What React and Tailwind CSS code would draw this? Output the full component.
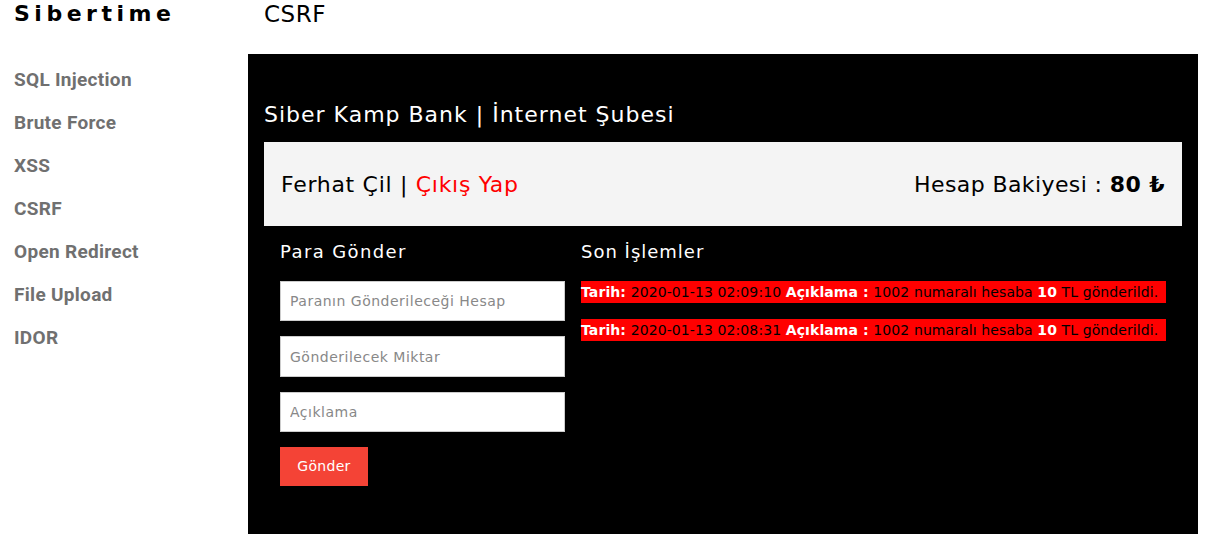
import React from 'react';

const menu = ['SQL Injection', 'Brute Force', 'XSS', 'CSRF', 'Open Redirect', 'File Upload', 'IDOR'];

const transactions = [
    { date: '2020-01-13 02:09:10' },
    { date: '2020-01-13 02:08:31' },
];

const App = () => {
    return (
        <div className="flex min-h-[556px] bg-white font-['DejaVu_Sans',sans-serif]">
            {/* sidebar */}
            <aside className="w-[248px] shrink-0 pl-[14px]">
                <div className="pt-[1px] text-[22px] font-bold leading-[26px] tracking-[4.5px] text-black">Sibertime</div>
                <nav className="mt-[41px] flex flex-col gap-[20px] font-['Roboto',sans-serif] text-[19px] font-bold tracking-[0.3px] text-[#707070]">
                    {menu.map((item) => (
                        <a key={item} href="#" className="leading-[23px]">{item}</a>
                    ))}
                </nav>
            </aside>

            {/* main */}
            <main className="flex-1 pr-[23px]">
                <h1 className="pl-[16px] pt-[1px] text-[23px] leading-[26px] tracking-[0.5px] text-black">CSRF</h1>
                <div className="mt-[27px] bg-black px-[16px] pb-[48px] pt-[45px]">
                    <h2 className="text-[22px] leading-[32px] tracking-[1px] text-white">Siber Kamp Bank | İnternet Şubesi</h2>
                    <div className="mt-[11px] flex h-[84px] items-center justify-between bg-[#f4f4f4] px-[17px] text-[22px] text-black">
                        <div className="tracking-[0.7px]">
                            Ferhat Çil | <a href="#" className="text-[#ff0000]">Çıkış Yap</a>
                        </div>
                        <div className="tracking-[0.4px]">
                            Hesap Bakiyesi : <span className="font-bold">80 ₺</span>
                        </div>
                    </div>

                    <div className="flex">
                        <section className="w-[301px] pl-[16px] pt-[13px]">
                            <h3 className="text-[18px] leading-[26px] tracking-[1.4px] text-white">Para Gönder</h3>
                            <form className="mt-[16px] flex flex-col gap-[15px]">
                                <input className="h-[40px] w-full border border-[#ccc] bg-white px-[9px] text-[14px] tracking-[0.5px] text-black outline-none placeholder:text-[#888]" placeholder="Paranın Gönderileceği Hesap" />
                                <input className="h-[41px] w-full border border-[#ccc] bg-white px-[9px] text-[14px] tracking-[0.5px] text-black outline-none placeholder:text-[#888]" placeholder="Gönderilecek Miktar" />
                                <input className="h-[40px] w-full border border-[#ccc] bg-white px-[9px] text-[14px] tracking-[0.5px] text-black outline-none placeholder:text-[#888]" placeholder="Açıklama" />
                                <button type="button" className="h-[39px] w-[88px] bg-[#f44336] text-[14px] tracking-[0.3px] text-white">Gönder</button>
                            </form>
                        </section>

                        <section className="flex-1 px-[16px] pt-[13px]">
                            <h3 className="text-[18px] leading-[26px] tracking-[1px] text-white">Son İşlemler</h3>
                            <div className="mt-[16px] flex flex-col gap-[16px]">
                                {transactions.map((t) => (
                                    <div key={t.date} className="flex h-[22px] items-center whitespace-nowrap bg-[#ff0000] text-[14px] tracking-[0.1px] text-black">
                                        <span className="font-semibold text-white">Tarih:</span>&nbsp;{t.date}&nbsp;
                                        <span className="font-semibold text-white">Açıklama :</span>&nbsp;1002 numaralı hesaba&nbsp;
                                        <span className="font-semibold text-white">10</span>&nbsp;TL gönderildi.
                                    </div>
                                ))}
                            </div>
                        </section>
                    </div>
                </div>
            </main>
        </div>
    );
};

export default App;
